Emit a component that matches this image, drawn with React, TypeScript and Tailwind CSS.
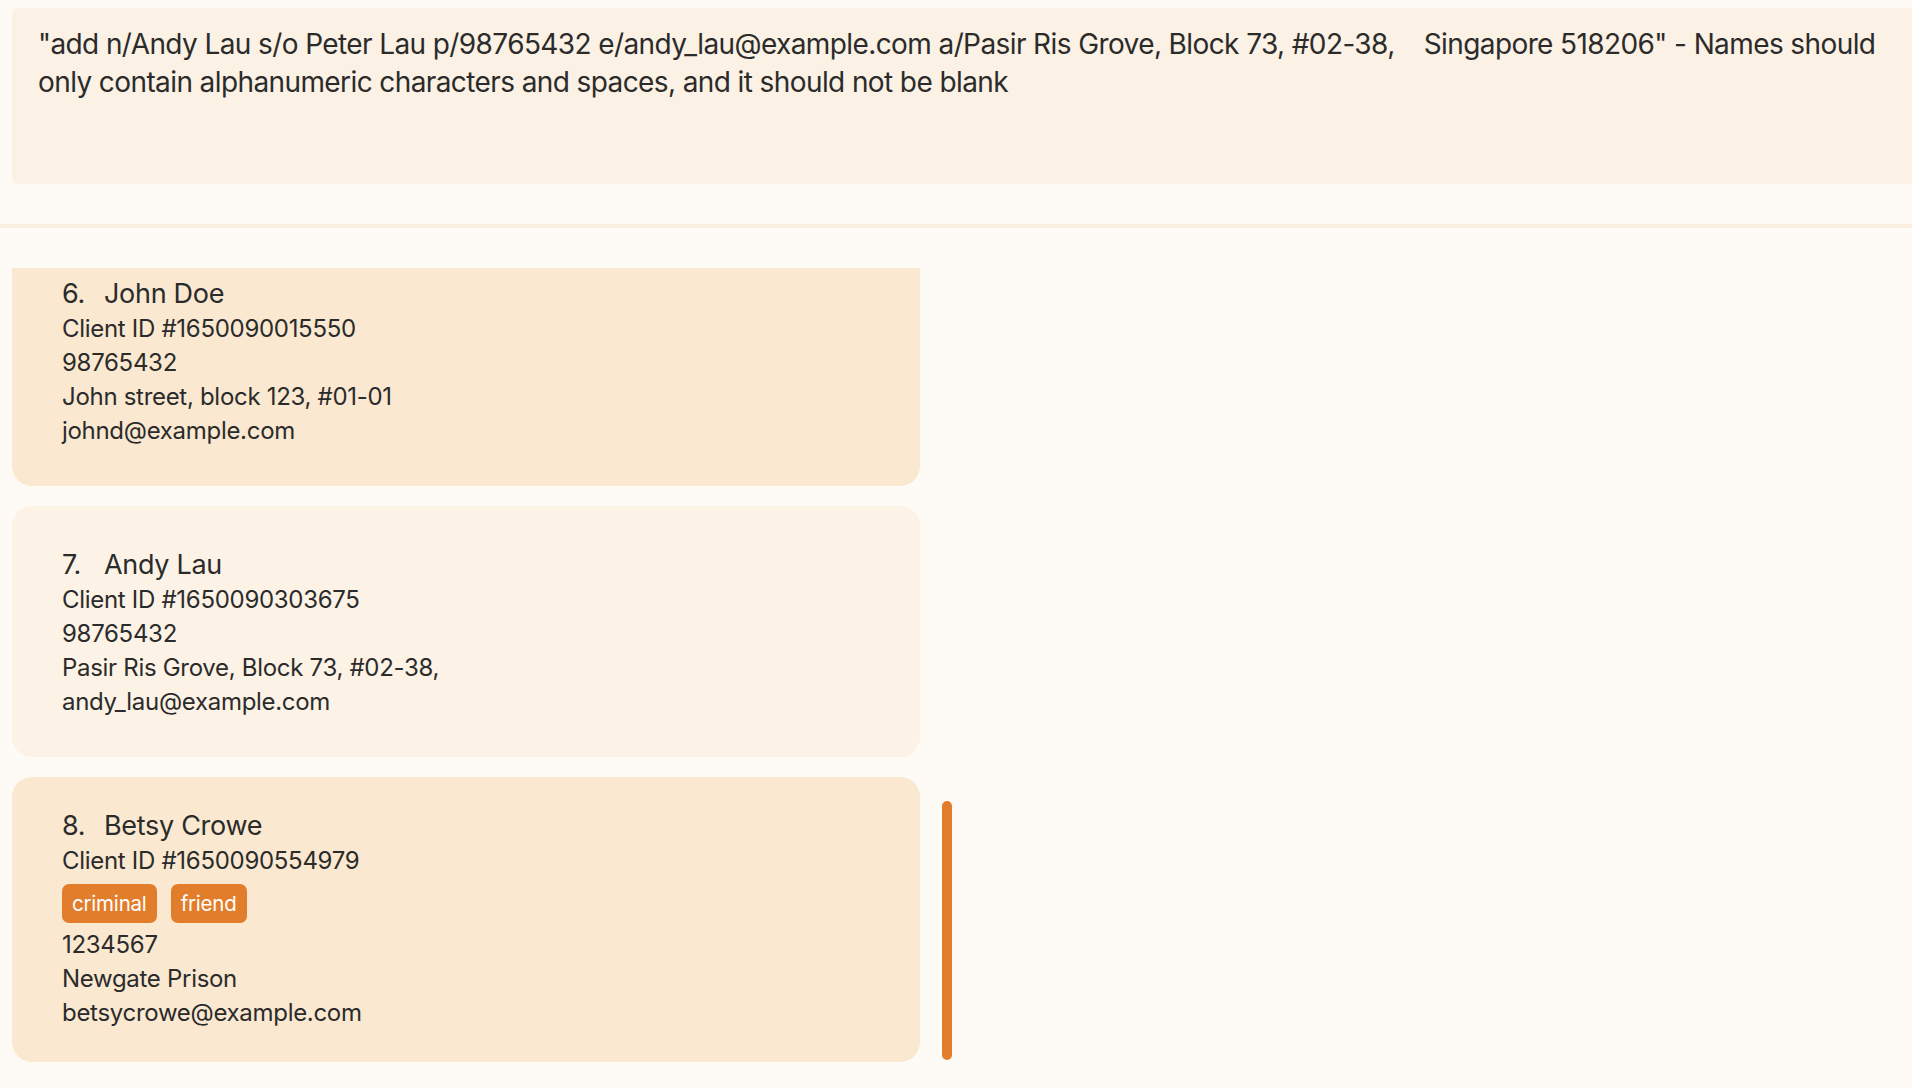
const clients = [
  {
    index: 6,
    name: 'John Doe',
    id: '1650090015550',
    tags: [] as string[],
    phone: '98765432',
    address: 'John street, block 123, #01-01',
    email: 'johnd@example.com',
  },
  {
    index: 7,
    name: 'Andy Lau',
    id: '1650090303675',
    tags: [] as string[],
    phone: '98765432',
    address: 'Pasir Ris Grove, Block 73, #02-38,',
    email: 'andy_lau@example.com',
  },
  {
    index: 8,
    name: 'Betsy Crowe',
    id: '1650090554979',
    tags: ['criminal', 'friend'],
    phone: '1234567',
    address: 'Newgate Prison',
    email: 'betsycrowe@example.com',
  },
];

type Client = (typeof clients)[number];

const ClientCard = ({ client, shade }: { client: Client; shade: 'dark' | 'light' }) => {
  const hasTags = client.tags.length > 0;
  return (
    <div
      className={
        'w-[908px] rounded-[20px] pl-[50px] ' +
        (shade === 'dark' ? 'bg-[#fae8d0] ' : 'bg-[#fcf2e6] ') +
        (hasTags ? 'pt-[30px] pb-[32px]' : 'pt-[40px] pb-[38px]')
      }
    >
      <div className="flex text-[27px] leading-[37px] tracking-[-0.3px] text-[#2b2b2b]">
        <span className="w-[42px]">{client.index}.</span>
        <span>{client.name}</span>
      </div>
      <div className="text-[24px] leading-[34px] tracking-[-0.3px] text-[#2b2b2b]">
        <div>Client ID #{client.id}</div>
        {hasTags && (
          <div className="mb-[5px] mt-[6px] flex gap-[14px]">
            {client.tags.map((tag) => (
              <span
                key={tag}
                className="flex h-[39px] items-center rounded-[7px] bg-[#e27d2b] px-[10px] text-[20.5px] tracking-[-0.2px] text-white"
              >
                {tag}
              </span>
            ))}
          </div>
        )}
        <div>{client.phone}</div>
        <div>{client.address}</div>
        <div>{client.email}</div>
      </div>
    </div>
  );
};

const App = () => {
  return (
    <div
      className="h-[1088px] w-full overflow-hidden bg-[#fefaf5] text-[#2b2b2b]"
      style={{ fontFamily: 'Inter, "Noto Sans", sans-serif' }}
    >
      <div className="pl-[12px] pt-[8px]">
        <div className="h-[176px] rounded-l-[6px] bg-[#fbf1e4] pl-[26px] pr-[20px] pt-[17px]">
          <p className="whitespace-pre-wrap text-[28px] leading-[38px] tracking-[-0.6px]">
            {'"add n/Andy Lau s/o Peter Lau p/98765432 e/andy_lau@example.com a/Pasir Ris Grove, Block 73, #02-38,    Singapore 518206" - Names should only contain alphanumeric characters and spaces, and it should not be blank'}
          </p>
        </div>
      </div>
      <div className="mt-[40px] h-[4px] w-full bg-[#fbefdf]" />
      <div className="mt-[40px] flex h-[800px] pl-[12px]">
        <div className="h-full overflow-hidden">
          <div className="-mt-[33px] flex flex-col gap-[20px]">
            <ClientCard client={clients[0]} shade="dark" />
            <ClientCard client={clients[1]} shade="light" />
            <ClientCard client={clients[2]} shade="dark" />
          </div>
        </div>
        <div className="ml-[22px] flex h-full flex-col justify-end pb-[8px]">
          <div className="h-[259px] w-[10px] rounded-full bg-[#e27d2b]" />
        </div>
      </div>
    </div>
  );
};

export default App;
